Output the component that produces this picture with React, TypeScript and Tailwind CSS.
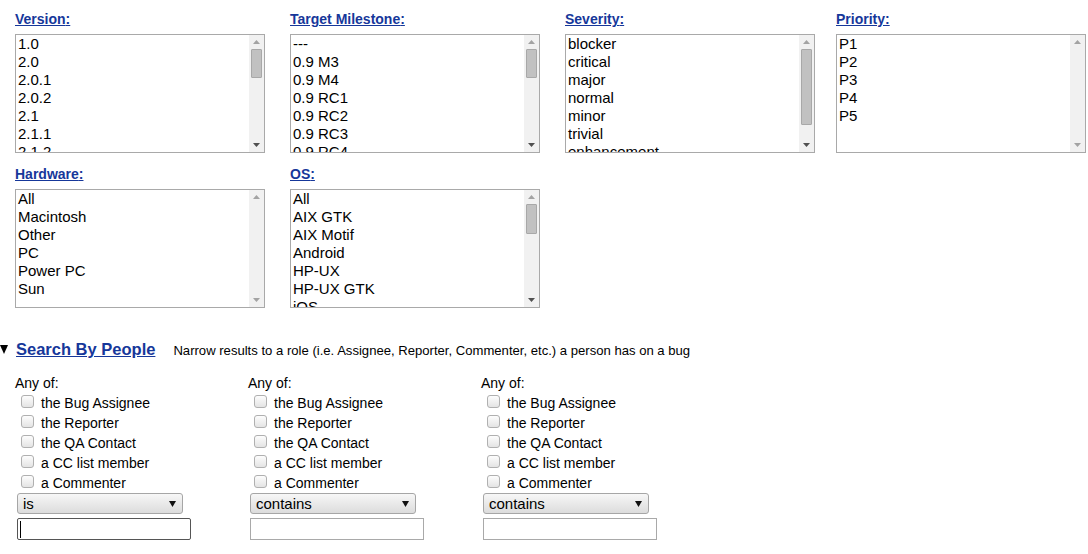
import React from "react";

const VERSIONS = ["1.0", "2.0", "2.0.1", "2.0.2", "2.1", "2.1.1", "2.1.2"];
const MILESTONES = ["---", "0.9 M3", "0.9 M4", "0.9 RC1", "0.9 RC2", "0.9 RC3", "0.9 RC4"];
const SEVERITIES = ["blocker", "critical", "major", "normal", "minor", "trivial", "enhancement"];
const PRIORITIES = ["P1", "P2", "P3", "P4", "P5"];
const HARDWARE = ["All", "Macintosh", "Other", "PC", "Power PC", "Sun"];
const OS = ["All", "AIX GTK", "AIX Motif", "Android", "HP-UX", "HP-UX GTK", "iOS"];
const ROLES = ["the Bug Assignee", "the Reporter", "the QA Contact", "a CC list member", "a Commenter"];

function Arrow({ up, enabled }: { up?: boolean; enabled?: boolean }) {
  return (
    <svg width="7" height="4" viewBox="0 0 7 4">
      <polygon
        points={up ? "0,4 7,4 3.5,0" : "0,0 7,0 3.5,4"}
        fill={enabled ? "#505050" : "#a3a3a3"}
      />
    </svg>
  );
}

function ListBox({ items, thumb }: { items: string[]; thumb?: string }) {
  return (
    <div className="flex h-[119px] w-[250px] border border-[#a9a9a9] bg-white">
      <div className="flex-1 overflow-hidden pl-[2px] text-[15px] leading-[18px] text-black">
        {items.map((i) => (
          <div key={i} className="whitespace-nowrap">
            {i}
          </div>
        ))}
      </div>
      <div className="flex w-[15px] flex-col bg-[#f1f1f1]">
        <div className="flex h-[14px] items-center justify-center">
          <Arrow up />
        </div>
        <div className="flex-1 px-[2px]">
          {thumb && <div className={`${thumb} rounded-[1px] border border-[#a8a8a8] bg-[#c1c1c1]`} />}
        </div>
        <div className="flex h-[14px] items-center justify-center">
          <Arrow enabled={!!thumb} />
        </div>
      </div>
    </div>
  );
}

function Field({ label, children, className }: { label: string; children: React.ReactNode; className?: string }) {
  return (
    <div className={className}>
      <div className="h-[16px] text-[14px] font-bold leading-[16px] text-[#16379a] underline">{label}:</div>
      <div className="mt-[7px]">{children}</div>
    </div>
  );
}

function PeopleColumn({ op, focused }: { op: string; focused?: boolean }) {
  return (
    <div className="w-[233px] text-[14px] leading-[20px] text-black">
      <div className="h-[20px]">Any of:</div>
      {ROLES.map((r) => (
        <div key={r} className="flex h-[20px] items-start">
          <span className="ml-[6px] mt-[2px] h-[13px] w-[13px] shrink-0 rounded-[3px] border border-[#b0b0b0] bg-gradient-to-b from-[#fdfdfd] to-[#e4e4e4]" />
          <span className="ml-[7px] whitespace-nowrap">{r}</span>
        </div>
      ))}
      <div className="ml-[2px] flex h-[21px] w-[166px] items-center justify-between rounded-[3px] border border-[#a6a6a6] bg-gradient-to-b from-[#f7f7f7] to-[#dcdcdc] pl-[5px] pr-[6px] text-[15px]">
        <span>{op}</span>
        <svg width="7" height="6" viewBox="0 0 7 6">
          <polygon points="0,0 7,0 3.5,6" fill="#111" />
        </svg>
      </div>
      {focused ? (
        <div className="ml-[2px] mt-[4px] flex h-[22px] w-[174px] items-center rounded-[2px] border border-[#555] bg-white pl-[2px]">
          <span className="h-[17px] w-px bg-black" />
        </div>
      ) : (
        <div className="ml-[2px] mt-[4px] h-[22px] w-[174px] border border-[#a9a9a9] bg-white" />
      )}
    </div>
  );
}

export default function App() {
  return (
    <div className="h-[554px] w-[1088px] overflow-hidden bg-white font-['Liberation_Sans',Arial,sans-serif] text-black">
      <div className="flex pl-[15px] pt-[11px]">
        <Field label="Version">
          <ListBox items={VERSIONS} thumb="h-[29px]" />
        </Field>
        <Field label="Target Milestone" className="ml-[25px]">
          <ListBox items={MILESTONES} thumb="h-[29px]" />
        </Field>
        <Field label="Severity" className="ml-[25px]">
          <ListBox items={SEVERITIES} thumb="h-[76px]" />
        </Field>
        <Field label="Priority" className="ml-[21px]">
          <ListBox items={PRIORITIES} />
        </Field>
      </div>

      <div className="mt-[13px] flex pl-[15px]">
        <Field label="Hardware">
          <ListBox items={HARDWARE} />
        </Field>
        <Field label="OS" className="ml-[25px]">
          <ListBox items={OS} thumb="h-[30px]" />
        </Field>
      </div>

      <div className="mt-[31px] flex h-[20px] items-baseline">
        <svg width="8" height="9" viewBox="0 0 8 9" className="self-center">
          <polygon points="0,0 8,0 4,9" fill="#000" />
        </svg>
        <span className="ml-[8px] text-[16.5px] font-bold leading-[20px] text-[#16379a] underline">Search By People</span>
        <span className="ml-[18px] text-[13.1px]">
          Narrow results to a role (i.e. Assignee, Reporter, Commenter, etc.) a person has on a bug
        </span>
      </div>

      <div className="mt-[14px] flex pl-[15px]">
        <PeopleColumn op="is" focused />
        <PeopleColumn op="contains" />
        <PeopleColumn op="contains" />
      </div>
    </div>
  );
}
